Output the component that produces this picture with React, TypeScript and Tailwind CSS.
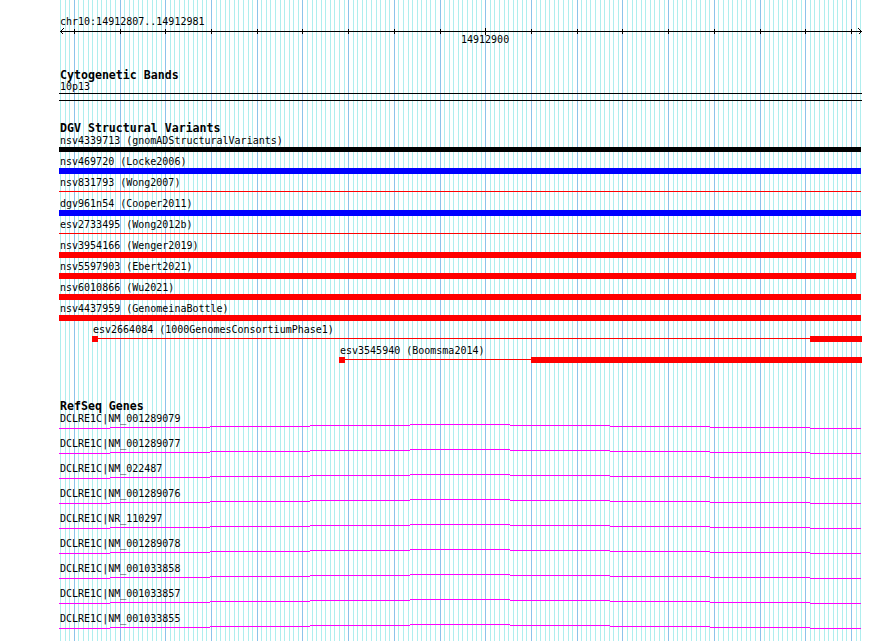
import React from "react";

const CYAN = "#afeeee";
const BLUE = "#8cc3ea";

const cyanXs: number[] = [];
for (let k = -3; k <= 172; k++) cyanXs.push(Math.floor(74.4 + k * 4.5714));
const blueXs: number[] = [];
for (let m = 0; m <= 17; m++) blueXs.push(Math.floor(74.4 + m * 45.714));

function Grid() {
  return (
    <svg
      className="absolute left-0 top-0"
      width={890}
      height={641}
      shapeRendering="crispEdges"
    >
      {cyanXs.map((x) => (
        <rect key={"c" + x} x={x} y={0} width={1} height={641} fill={CYAN} />
      ))}
      {blueXs.map((x) => (
        <rect key={"b" + x} x={x} y={0} width={1} height={641} fill={BLUE} />
      ))}
    </svg>
  );
}

function Ruler() {
  return (
    <svg width={805} height={8} shapeRendering="crispEdges" className="block">
      <rect x={1} y={4} width={802} height={1} fill="#000" />
      {blueXs.map((x) =>
        x === 485 ? (
          <rect key={x} x={x - 59} y={1} width={1} height={7} fill="#000" />
        ) : (
          <rect key={x} x={x - 59} y={2} width={1} height={5} fill="#000" />
        )
      )}
      <path d="M4.5 1.5 L1.5 4.5 L4.5 7.5" stroke="#000" strokeWidth={1} fill="none" />
      <path d="M799.5 1.5 L802.5 4.5 L799.5 7.5" stroke="#000" strokeWidth={1} fill="none" />
    </svg>
  );
}

const geneSegs: [number, number, number][] = [
  [0, 51, 4],
  [51, 151, 3],
  [151, 251, 2],
  [251, 351, 1],
  [351, 451, 0],
  [451, 551, 1],
  [551, 651, 2],
  [651, 751, 3],
  [751, 802, 4],
];

function GeneLine() {
  return (
    <svg width={803} height={6} shapeRendering="crispEdges" className="block">
      {geneSegs.map(([a, b, y]) => (
        <rect key={a} x={a} y={y} width={b - a} height={1} fill="#ff00ff" />
      ))}
    </svg>
  );
}

type Row = { label: string; kind: "black" | "blue" | "red" | "thin"; w?: number };

const dgvRows: Row[] = [
  { label: "nsv4339713 (gnomADStructuralVariants)", kind: "black" },
  { label: "nsv469720 (Locke2006)", kind: "blue" },
  { label: "nsv831793 (Wong2007)", kind: "thin" },
  { label: "dgv961n54 (Cooper2011)", kind: "blue" },
  { label: "esv2733495 (Wong2012b)", kind: "thin" },
  { label: "nsv3954166 (Wenger2019)", kind: "red" },
  { label: "nsv5597903 (Ebert2021)", kind: "red", w: 797 },
  { label: "nsv6010866 (Wu2021)", kind: "red" },
  { label: "nsv4437959 (GenomeinaBottle)", kind: "red" },
];

const genes = [
  "NM_001289079",
  "NM_001289077",
  "NM_022487",
  "NM_001289076",
  "NR_110297",
  "NM_001289078",
  "NM_001033858",
  "NM_001033857",
  "NM_001033855",
];

function Label({ children, className = "" }: { children: React.ReactNode; className?: string }) {
  return (
    <div className={"h-[10px] pl-px text-[10px] leading-[10px] whitespace-pre text-black " + className}>
      {children}
    </div>
  );
}

function Title({ children }: { children: React.ReactNode }) {
  return (
    <div className="h-[12px] pl-px text-[11.6px] leading-[12px] font-bold whitespace-pre text-black">
      {children}
    </div>
  );
}

function DgvBar({ row }: { row: Row }) {
  if (row.kind === "thin") {
    return (
      <div className="h-[6px] flex flex-col">
        <div className="mt-[2px] h-px w-[802px] bg-[#ff0000]" />
      </div>
    );
  }
  if (row.kind === "black") {
    return <div className="h-[6px]"><div className="h-[5px] w-[802px] bg-black" /></div>;
  }
  if (row.kind === "blue") {
    return <div className="h-[6px] w-[802px] bg-[#0000ff]" />;
  }
  return (
    <div
      className="h-[6px] bg-[#ff0000]"
      style={{ width: (row.w ?? 802) + "px" }}
    />
  );
}

export default function App() {
  return (
    <div className="relative w-[890px] h-[641px] overflow-hidden bg-white font-['DejaVu_Sans_Mono','Liberation_Mono',monospace]">
      <Grid />
      <div className="relative ml-[59px] w-[803px] flex flex-col">
        <div className="mt-[17px]">
          <Label>chr10:14912807..14912981</Label>
        </div>
        <Ruler />
        <Label className="ml-[401px]">14912900</Label>

        <div className="mt-[24px]">
          <Title>Cytogenetic Bands</Title>
        </div>
        <div className="mt-px">
          <Label>10p13</Label>
        </div>
        <div className="mt-px h-px w-[803px] bg-black" />
        <div className="mt-[6px] h-px w-[803px] bg-black" />

        <div className="mt-[21px]">
          <Title>DGV Structural Variants</Title>
        </div>
        <div className="mt-[2px] flex flex-col">
          {dgvRows.map((r) => (
            <div key={r.label} className="h-[21px] flex flex-col">
              <Label>{r.label}</Label>
              <div className="mt-px">
                <DgvBar row={r} />
              </div>
            </div>
          ))}
          <div className="h-[21px] flex flex-col">
            <Label className="ml-[33px]">esv2664084 (1000GenomesConsortiumPhase1)</Label>
            <div className="mt-px flex items-start">
              <div className="ml-[33px] w-[6px] h-[6px] bg-[#ff0000]" />
              <div className="mt-[2px] w-[712px] h-px bg-[#ff0000]" />
              <div className="w-[52px] h-[6px] bg-[#ff0000]" />
            </div>
          </div>
          <div className="h-[21px] flex flex-col">
            <Label className="ml-[280px]">esv3545940 (Boomsma2014)</Label>
            <div className="mt-px flex items-start">
              <div className="ml-[280px] w-[6px] h-[6px] bg-[#ff0000]" />
              <div className="mt-[2px] w-[186px] h-px bg-[#ff0000]" />
              <div className="w-[331px] h-[6px] bg-[#ff0000]" />
            </div>
          </div>
        </div>

        <div className="mt-[33px]">
          <Title>RefSeq Genes</Title>
        </div>
        <div className="mt-[2px] flex flex-col">
          {genes.map((g) => (
            <div key={g} className="h-[25px] flex flex-col">
              <Label>{"DCLRE1C|" + g}</Label>
              <GeneLine />
            </div>
          ))}
        </div>
      </div>
    </div>
  );
}
